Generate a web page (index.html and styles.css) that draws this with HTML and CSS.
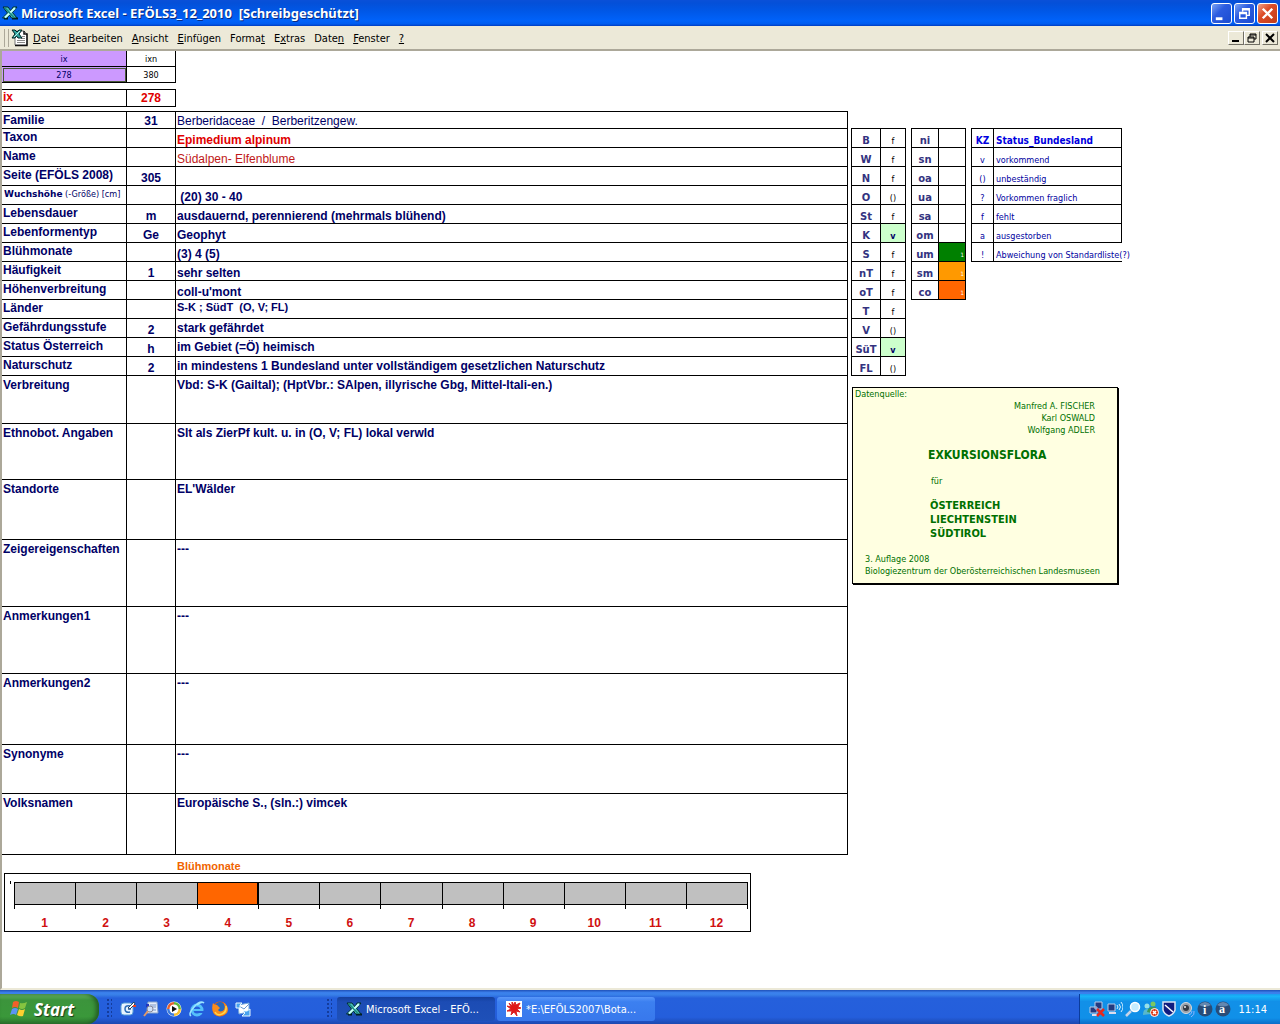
FILE: index.html
```html
<!DOCTYPE html>
<html lang="de">
<head>
<meta charset="UTF-8">
<meta name="viewport" content="width=device-width, initial-scale=1.0">
<title>Microsoft Excel - EFÖLS3_12_2010 [Schreibgeschützt]</title>
<link rel="stylesheet" href="styles.css">
</head>
<body>
  <svg class="defs" width="0" height="0" aria-hidden="true">
    <symbol id="excel" viewBox="0 0 16 16">
      <path d="M2 13.500H6M10 13.500H16" stroke="#001a1a" stroke-width="2"/>
      <path d="M1 2H6L9 6L11 2H15L10.500 7.500L15 13H9.500L7.500 10L5 13H0.500L5.500 8Z" fill="#4cc4bc" stroke="#002c2c"/>
      <path d="M13 3L3 12.500" stroke="#c8fff8" stroke-width="2"/>
      <path d="M3 3L12 12.500" stroke="#1c8880" stroke-width="1.500"/>
    </symbol>
  </svg>

  <header class="titlebar">
    <svg class="icon"><use href="#excel"/></svg>
    <h1>Microsoft Excel - EFÖLS3_12_2010&nbsp; [Schreibgeschützt]</h1>
    <div class="window-buttons">
      <button aria-label="Minimieren"><svg viewBox="0 0 20 20"><path d="M4 14H11V17H4Z" fill="#fff"/></svg></button>
      <button aria-label="Verkleinern"><svg viewBox="0 0 20 20"><path d="M8 8V5H15V12H12M8 6H15M5 9H12V15H5ZM5 10H12" fill="none" stroke="#fff" stroke-width="1.500"/></svg></button>
      <button class="close" aria-label="Schließen"><svg viewBox="0 0 20 20"><path d="M5 5L15 15M15 5L5 15" stroke="#fff" stroke-width="2.500"/></svg></button>
    </div>
  </header>

  <nav class="menubar">
    <span class="grip"></span>
    <svg class="icon doc" viewBox="0 0 18 18">
      <path d="M4 2H13L16 5V16H4Z" fill="#fff" stroke="#777"/>
      <path d="M13 2V5H16V16.500H4" fill="none" stroke="#111" stroke-width="1.500"/>
      <path d="M6 11.500H14M6 13.500H14M11 7.500H14M10 9.500H14" stroke="#888"/>
      <path d="M1 1H4L6 3L8 1H11L8 5L11 9H7L5.500 7L4 9H1L4 5Z" fill="#33a7a0" stroke="#022"/>
      <path d="M9 2L3 8" stroke="#b8f4ee"/>
    </svg>
    <button><u>D</u>atei</button>
    <button><u>B</u>earbeiten</button>
    <button><u>A</u>nsicht</button>
    <button><u>E</u>infügen</button>
    <button>Forma<u>t</u></button>
    <button>E<u>x</u>tras</button>
    <button>Date<u>n</u></button>
    <button><u>F</u>enster</button>
    <button><u>?</u></button>
    <div class="doc-buttons">
      <button aria-label="Mappe minimieren"><svg viewBox="0 0 12 10"><path d="M2 7H9V9H2Z"/></svg></button>
      <button aria-label="Mappe verkleinern"><svg viewBox="0 0 12 10"><path d="M4 4V1H10V6H8M4 2H10M2 4H8V9H2ZM2 5H8" fill="none" stroke="#000"/></svg></button>
      <button class="doc-close" aria-label="Mappe schließen"><svg viewBox="0 0 12 10"><path d="M2 1L10 9M10 1L2 9" stroke="#000" stroke-width="2"/></svg></button>
    </div>
  </nav>

  <main class="sheet">
    <section class="record">
      <table class="grid index">
        <tr><td class="violet">ix</td><td>ixn</td></tr>
        <tr><td class="violet selected">278</td><td>380</td></tr>
      </table>
      <table class="grid current">
        <tr><th>ix</th><td>278</td></tr>
      </table>
      <table class="grid fields">
        <tr class="first"><th>Familie</th><td>31</td><td class="plain">Berberidaceae&nbsp; /&nbsp; Berberitzengew.</td></tr>
        <tr><th>Taxon</th><td></td><td class="red">Epimedium alpinum</td></tr>
        <tr><th>Name</th><td></td><td class="plain darkred">Südalpen- Elfenblume</td></tr>
        <tr><th>Seite (EFÖLS 2008)</th><td>305</td><td></td></tr>
        <tr><th class="small"><b>Wuchshöhe</b> (-Größe) [cm]</th><td></td><td>&nbsp;(20) 30 - 40</td></tr>
        <tr><th>Lebensdauer</th><td>m</td><td>ausdauernd, perennierend (mehrmals blühend)</td></tr>
        <tr><th>Lebenformentyp</th><td>Ge</td><td>Geophyt</td></tr>
        <tr><th>Blühmonate</th><td></td><td>(3) 4 (5)</td></tr>
        <tr><th>Häufigkeit</th><td>1</td><td>sehr selten</td></tr>
        <tr><th>Höhenverbreitung</th><td></td><td>coll-u'mont</td></tr>
        <tr><th>Länder</th><td></td><td class="lands">S-K ; SüdT&nbsp; (O, V; FL)</td></tr>
        <tr><th>Gefährdungsstufe</th><td>2</td><td class="mid">stark gefährdet</td></tr>
        <tr><th>Status Österreich</th><td>h</td><td class="mid">im Gebiet (=Ö) heimisch</td></tr>
        <tr><th>Naturschutz</th><td>2</td><td class="mid">in mindestens 1 Bundesland unter vollständigem gesetzlichen Naturschutz</td></tr>
        <tr class="long h48"><th>Verbreitung</th><td></td><td>Vbd: S-K (Gailtal); (HptVbr.: SAlpen, illyrische Gbg, Mittel-Itali-en.)</td></tr>
        <tr class="long h56"><th>Ethnobot. Angaben</th><td></td><td>Slt als ZierPf kult. u. in (O, V; FL) lokal verwld</td></tr>
        <tr class="long h60"><th>Standorte</th><td></td><td>EL'Wälder</td></tr>
        <tr class="long h67"><th>Zeigereigenschaften</th><td></td><td>---</td></tr>
        <tr class="long h67"><th>Anmerkungen1</th><td></td><td>---</td></tr>
        <tr class="long h71"><th>Anmerkungen2</th><td></td><td>---</td></tr>
        <tr class="long h49"><th>Synonyme</th><td></td><td>---</td></tr>
        <tr class="long h61"><th>Volksnamen</th><td></td><td>Europäische S., (sln.:) vimcek</td></tr>
      </table>

      <h2 class="chart-title">Blühmonate</h2>
      <div class="chart">
        <div class="months">
          <div class="month"><span></span>1</div>
          <div class="month"><span></span>2</div>
          <div class="month"><span></span>3</div>
          <div class="month on"><span></span>4</div>
          <div class="month"><span></span>5</div>
          <div class="month"><span></span>6</div>
          <div class="month"><span></span>7</div>
          <div class="month"><span></span>8</div>
          <div class="month"><span></span>9</div>
          <div class="month"><span></span>10</div>
          <div class="month"><span></span>11</div>
          <div class="month"><span></span>12</div>
        </div>
      </div>
    </section>

    <aside class="side">
      <div class="lists">
        <table class="grid codes lands-table">
          <tr><th>B</th><td>f</td></tr>
          <tr><th>W</th><td>f</td></tr>
          <tr><th>N</th><td>f</td></tr>
          <tr><th>O</th><td>()</td></tr>
          <tr><th>St</th><td>f</td></tr>
          <tr><th>K</th><td class="present">v</td></tr>
          <tr><th>S</th><td>f</td></tr>
          <tr><th>nT</th><td>f</td></tr>
          <tr><th>oT</th><td>f</td></tr>
          <tr><th>T</th><td>f</td></tr>
          <tr><th>V</th><td>()</td></tr>
          <tr><th>SüT</th><td class="present">v</td></tr>
          <tr><th>FL</th><td>()</td></tr>
        </table>
        <table class="grid codes zones-table">
          <tr><th>ni</th><td></td></tr>
          <tr><th>sn</th><td></td></tr>
          <tr><th>oa</th><td></td></tr>
          <tr><th>ua</th><td></td></tr>
          <tr><th>sa</th><td></td></tr>
          <tr><th>om</th><td></td></tr>
          <tr><th>um</th><td class="zone green">1</td></tr>
          <tr><th>sm</th><td class="zone amber">1</td></tr>
          <tr><th>co</th><td class="zone orange">1</td></tr>
        </table>
        <table class="grid codes status-table">
          <tr><th>KZ</th><th>Status_Bundesland</th></tr>
          <tr><td>v</td><td>vorkommend</td></tr>
          <tr><td>()</td><td>unbeständig</td></tr>
          <tr><td>?</td><td>Vorkommen fraglich</td></tr>
          <tr><td>f</td><td>fehlt</td></tr>
          <tr><td>a</td><td>ausgestorben</td></tr>
          <tr class="last"><td>!</td><td>Abweichung von Standardliste(?)</td></tr>
        </table>
      </div>

      <div class="source">
        <p>Datenquelle:</p>
        <p class="authors">Manfred A. FISCHER<br>Karl OSWALD<br>Wolfgang ADLER</p>
        <div class="book">
          <h2>EXKURSIONSFLORA</h2>
          <p>für</p>
          <h3>ÖSTERREICH<br>LIECHTENSTEIN<br>SÜDTIROL</h3>
        </div>
        <p class="edition">3. Auflage 2008<br>Biologiezentrum der Oberösterreichischen Landesmuseen</p>
      </div>
    </aside>
  </main>

  <footer class="taskbar">
    <button class="start">
      <svg viewBox="0 0 20 18">
        <path d="M3 2Q6 0 9 2L8 8Q5 6 2 8Z" fill="#f0602a"/>
        <path d="M10 3Q13 4 17 2L15 8Q12 10 9 8Z" fill="#86c440"/>
        <path d="M2 9Q5 7 8 9L6 15Q4 13 0 15Z" fill="#5b94f4"/>
        <path d="M9 9Q12 11 15 9L13 16Q10 17 7 15Z" fill="#fcd030"/>
      </svg>
      Start
    </button>
    <span class="dots"></span>
    <div class="quick">
      <button aria-label="Desktop anzeigen"><svg viewBox="0 0 16 16"><rect x="1" y="2" width="12" height="12" rx="3" fill="#e8f4ff" stroke="#5aa0d8"/><path d="M10 5Q5 4 5 8T10 11M8 8H11" fill="none" stroke="#2a6cb8" stroke-width="1.500"/><path d="M8 7L14 1L15 3L10 8Z" fill="#fff" stroke="#246"/><path d="M13 5H16" stroke="#e84020" stroke-width="2"/></svg></button>
      <button aria-label="Suche"><svg viewBox="0 0 16 16"><path d="M5 1H14L15 12H4Z" fill="#e6eefa" stroke="#8aa6cc"/><path d="M7 4H13M7 6H13M8 9H13" stroke="#7898c8"/><path d="M3 3H6V6H3Z" fill="#2238c0"/><circle cx="7" cy="8" r="3" fill="#cfe2fa" stroke="#889"/><path d="M5 10L1 15" stroke="#e29a68" stroke-width="2"/></svg></button>
      <button aria-label="Media Player"><svg viewBox="0 0 16 16"><circle cx="8" cy="8" r="7.500" fill="#f6f6f0"/><path d="M8 1A7 7 0 0 0 1 8H4A4 4 0 0 1 8 4Z" fill="#e66030"/><path d="M8 1A7 7 0 0 1 15 8H12A4 4 0 0 0 8 4Z" fill="#62b83c"/><path d="M1 8A7 7 0 0 0 8 15V12A4 4 0 0 1 4 8Z" fill="#3c7ce0"/><path d="M15 8A7 7 0 0 1 8 15V12A4 4 0 0 0 12 8Z" fill="#f8c030"/><circle cx="8" cy="8" r="4.500" fill="#fff"/><path d="M6 5L11 8L6 11Z" fill="#111"/></svg></button>
      <button aria-label="Internet Explorer"><svg viewBox="0 0 16 16"><circle cx="8" cy="9" r="5" fill="none" stroke="#54c0fa" stroke-width="3"/><path d="M4 9H13" stroke="#54c0fa" stroke-width="2"/><path d="M9 11H15" stroke="#245edc" stroke-width="2"/><path d="M2 15Q-1 13 5 6T15 2Q13 0 8 4" fill="none" stroke="#9be4ff" stroke-width="1.500"/></svg></button>
      <button aria-label="Firefox"><svg viewBox="0 0 16 16"><circle cx="8" cy="8" r="7.500" fill="#e85c10"/><circle cx="8" cy="6" r="5" fill="#2468c0"/><path d="M1 2Q2 4 5 4L8 7L6 9Q8 12 12 9Q14 5 11 1Q18 6 15 12Q8 18 2 13Q-1 8 1 2Z" fill="#fa8c1c"/><path d="M14 5Q15 11 10 13T3 11" fill="none" stroke="#ffd54a" stroke-width="1.500"/></svg></button>
      <button aria-label="Outlook Express"><svg viewBox="0 0 16 16"><path d="M3 4L14 2V11L4 13Z" fill="#fff" stroke="#75a9dc"/><path d="M4 5L9 8L14 3" fill="none" stroke="#6a9ad0"/><path d="M1 2H7L5 4V7H1ZM15 8V15H7L10 12L8 10H12Z" fill="#49a2ee" stroke="#e8f8ff"/></svg></button>
    </div>
    <span class="dots second"></span>
    <button class="task active"><svg class="icon"><use href="#excel"/></svg>Microsoft Excel - EFÖ...</button>
    <button class="task"><svg class="icon" viewBox="0 0 16 16"><path d="M0 0H16V16H0Z" fill="#fff"/><path d="M6 1L8 4L9 1L10 4L14 2L12 6L15 7L11 8L14 11L10 10L11 15L8 11L5 14L6 10L1 10L5 8L1 5L5 6L3 2L6 5Z" fill="#e01818" stroke="#d22"/></svg>*E:\EFÖLS2007\Bota...</button>
    <div class="tray">
      <svg viewBox="0 0 16 16"><path d="M6 1H13V8H6ZM1 6H8V12H1Z" fill="#223a80" stroke="#b8cce8"/><path d="M3 14H10" stroke="#dde" stroke-width="2"/><path d="M8 8L15 15M15 8L8 15" stroke="#e8281c" stroke-width="2.500"/></svg>
      <svg viewBox="0 0 16 16"><path d="M1 3H8V10H1Z" fill="#223a80" stroke="#b8cce8"/><path d="M2 12H9" stroke="#dde" stroke-width="2"/><path d="M10 4Q12 6 10 8M12 3Q15 6 12 9M14 1Q18 6 14 11" fill="none" stroke="#d8f0ff"/></svg>
      <svg viewBox="0 0 16 16"><path d="M6 10L1 15" stroke="#c8d4e8" stroke-width="2.500"/><circle cx="10" cy="6" r="4.500" fill="#c4ecff" stroke="#fff" stroke-width="1.500"/></svg>
      <svg viewBox="0 0 16 16"><circle cx="4" cy="5" r="2.500" fill="#98e0e8"/><path d="M0 14Q0 7 5 8L8 13Z" fill="#58b8cc"/><circle cx="10" cy="3" r="2.500" fill="#7cc860"/><path d="M4 11Q5 5 13 6V13Z" fill="#3c9858"/><circle cx="11.500" cy="11.500" r="4" fill="#dd3a18" stroke="#fff"/><path d="M10 10L13 13M13 10L10 13" stroke="#fff" stroke-width="1.500"/></svg>
      <svg viewBox="0 0 16 16"><path d="M2 1H14V9Q13 13 8 15Q3 13 2 9Z" fill="#101c80" stroke="#d8e4f4" stroke-width="1.500"/><path d="M4 4L12 11" stroke="#fff" stroke-width="1.500"/></svg>
      <svg viewBox="0 0 16 16"><circle cx="7" cy="7" r="5.500" fill="#9aa0a8" stroke="#d8dce0"/><circle cx="7" cy="7" r="3" fill="#343a44"/><circle cx="6" cy="6" r="1" fill="#eee"/><path d="M10 14Q13 13 13 10M12 16Q16 14 15 10" fill="none" stroke="#8ab4ff"/></svg>
      <svg viewBox="0 0 16 16"><circle cx="8" cy="8" r="7.500" fill="#284c78"/><path d="M2 4Q8-2 14 4Q8 7 2 4Z" fill="#6488b0"/><text x="6" y="13" class="badge">i</text></svg>
      <svg viewBox="0 0 16 16"><circle cx="8" cy="8" r="7.500" fill="#284c78"/><path d="M2 4Q8-2 14 4Q8 7 2 4Z" fill="#6488b0"/><text x="4" y="12" class="badge">a</text></svg>
      <time>11:14</time>
    </div>
  </footer>
</body>
</html>
```

FILE: styles.css
```css
* {
  box-sizing: border-box;
}

body {
  margin: 0;
  min-height: 100vh;
  display: flex;
  flex-direction: column;
  background-color: #fff;
  font-family: "DejaVu Sans Condensed", "DejaVu Sans", Tahoma, sans-serif;
  font-size: 11px;
}

h1, h2, h3, p {
  margin: 0;
}

button {
  font: inherit;
  color: inherit;
  background: none;
  border: none;
  padding: 0;
}

.defs {
  position: absolute;
}

.icon {
  width: 16px;
  height: 16px;
  flex: none;
}

/* title bar */
.titlebar {
  height: 26px;
  display: flex;
  align-items: center;
  gap: 3px;
  padding: 0 2px;
  background: linear-gradient(#0a50d8, #0450d8 12%, #0058e8 45%, #0062fa 80%, #005cf0 92%, #003cc0);
  color: #fff;
}

.titlebar h1 {
  flex: 1;
  font: bold 13px "Noto Sans", sans-serif;
  text-shadow: 1px 1px #0a2a80;
  white-space: nowrap;
}

.window-buttons {
  display: flex;
  gap: 2px;
}

.window-buttons button {
  width: 21px;
  height: 21px;
  border: 1px solid #fff;
  border-radius: 3px;
  background: linear-gradient(135deg, #7ca4f4, #2c5ce0 40%, #1c4cd0);
}

.window-buttons .close {
  background: linear-gradient(135deg, #f0a088, #dc4c28 40%, #c03c18);
}

.window-buttons svg {
  display: block;
  width: 19px;
  height: 19px;
}

/* menu bar */
.menubar {
  height: 25px;
  display: flex;
  align-items: center;
  gap: 9px;
  padding: 1px 2px 0 4px;
  background-color: #ece9d8;
  border-bottom: 2px solid #aca899;
}

.grip {
  width: 5px;
  height: 18px;
  border-left: 1px solid #aca899;
  border-right: 1px solid #aca899;
}

.menubar .doc {
  width: 18px;
  height: 18px;
  margin: 0 -5px 0 -7px;
}

.menubar button {
  white-space: nowrap;
}

.doc-buttons {
  display: flex;
  margin-left: auto;
}

.doc-buttons button {
  width: 16px;
  height: 14px;
  border: 1px solid;
  border-color: #fff #716f64 #716f64 #fff;
}

.doc-buttons .doc-close {
  margin-left: 2px;
}

.doc-buttons svg {
  display: block;
  width: 12px;
  height: 10px;
  margin: 1px;
}

/* sheet */
.sheet {
  flex: 1;
  display: flex;
  gap: 3px;
  border-left: 2px solid #aca899;
  border-bottom: 2px solid #ece9d8;
}

.record {
  flex: 0 1 846px;
}

.grid {
  table-layout: fixed;
  border-spacing: 0;
  color: #000066;
}

.grid th,
.grid td {
  height: 19px;
  padding: 0 1px;
  border-right: 1px solid #000;
  border-bottom: 1px solid #000;
  white-space: nowrap;
  overflow: hidden;
}

.index,
.current {
  width: 174px;
}

.index td {
  height: 16px;
  font-size: 9px;
  line-height: 12px;
  text-align: center;
  color: #000;
}

.index td:first-child,
.current th,
.fields th {
  width: 125px;
}

.index .violet {
  background-color: #cc99ff;
  color: #000066;
}

.index .selected {
  outline: 1px solid #4a5a3a;
  outline-offset: -2px;
}

.current {
  margin: 6px 0 4px;
  border-top: 1px solid #000;
}

.current th,
.current td {
  height: 17px;
  font-family: "Liberation Sans", Arial, sans-serif;
  font-size: 12px;
  line-height: 14px;
  font-weight: bold;
  text-align: center;
  color: #e00000;
}

.current th {
  text-align: left;
  vertical-align: top;
}

.fields {
  width: 100%;
  border-top: 1px solid #000;
  font-family: "Liberation Sans", Arial, sans-serif;
  font-size: 12px;
  line-height: 14px;
}

.fields th {
  padding-top: 1px;
  text-align: left;
  vertical-align: top;
}

.fields td {
  font-weight: bold;
  vertical-align: bottom;
}

.fields td:nth-child(2) {
  width: 49px;
  text-align: center;
}

.fields .first th,
.fields .first td {
  height: 17px;
}

.fields .plain {
  font-weight: normal;
}

.fields .red {
  color: #e00000;
}

.fields .darkred {
  color: #c01818;
}

.fields .small {
  padding-left: 2px;
  font-family: "DejaVu Sans Condensed", "DejaVu Sans", sans-serif;
  font-size: 9px;
  font-weight: normal;
}

.fields .small b {
  font-family: "DejaVu Sans", sans-serif;
}

.fields .lands {
  font-size: 11px;
  vertical-align: top;
}

.fields .mid {
  vertical-align: middle;
}

.fields .long th,
.fields .long td {
  padding-top: 2px;
  vertical-align: top;
}

.fields .h48 td { height: 48px; }
.fields .h49 td { height: 49px; }
.fields .h56 td { height: 56px; }
.fields .h60 td { height: 60px; }
.fields .h61 td { height: 61px; }
.fields .h67 td { height: 67px; }
.fields .h71 td { height: 71px; }

/* flowering months */
.chart-title {
  margin: 4px 0 0 175px;
  font: bold 11px/14px "Liberation Sans", Arial, sans-serif;
  color: #f06400;
}

.chart {
  width: 747px;
  max-width: 100%;
  margin-left: 2px;
  padding: 8px 2px 2px 9px;
  border: 1px solid #000;
  background: linear-gradient(#000, #000) 5px 7px / 1px 3px no-repeat;
}

/* the axis ticks run 4px below the bar */
.months {
  display: grid;
  grid-template-columns: repeat(12, 1fr);
  padding-right: 1px;
  background: linear-gradient(#000, #000) right top / 1px 27px no-repeat;
}

.month {
  height: 47px;
  background: linear-gradient(#000, #000) left top / 1px 27px no-repeat;
  font: bold 12px/14px "Liberation Sans", Arial, sans-serif;
  text-align: center;
  color: #d01010;
}

.month span {
  display: block;
  height: 23px;
  margin-bottom: 11px;
  border: 1px solid #000;
  border-right: none;
  background-color: #c0c0c0;
}

.month.on span {
  border-right: 1px solid #000;
  background-color: #ff6600;
}

/* side lists */
.side {
  padding-top: 77px;
}

.lists {
  display: flex;
  align-items: flex-start;
  gap: 5px;
}

.codes {
  border-top: 1px solid #000;
  border-left: 1px solid #000;
  font-size: 9px;
  line-height: 12px;
}

.codes th,
.codes td {
  text-align: center;
  vertical-align: bottom;
}

.codes th {
  font-family: "DejaVu Sans", Verdana, sans-serif;
  font-size: 10px;
  color: #333380;
}

.lands-table {
  width: 55px;
}

.lands-table th {
  width: 29px;
}

.lands-table td {
  color: #000;
}

.lands-table .present {
  background-color: #ccffcc;
  color: #000066;
  font-weight: bold;
}

.zones-table {
  width: 55px;
}

.zones-table th {
  width: 27px;
}

.codes .zone {
  color: #fff;
  font-size: 6px;
  text-align: right;
}

.green { background-color: #008000; }
.amber { background-color: #ff9900; }
.orange { background-color: #ff6600; }

.status-table {
  width: 151px;
  border-right: none;
}

.status-table th,
.status-table td {
  color: #0000a0;
}

.status-table th {
  font-size: 10px;
  font-family: inherit;
  color: #0000e0;
}

.status-table tr > :first-child {
  width: 22px;
}

.status-table tr > :last-child {
  padding-left: 2px;
  text-align: left;
}

.status-table .last td:last-child {
  border-right: none;
  overflow: visible;
}

/* source note */
.source {
  width: 266px;
  margin: 11px 0 0 1px;
  padding: 0 2px 6px;
  border: 1px solid #000;
  box-shadow: 1px 1px #000;
  background-color: #ffffe1;
  color: #007000;
  font-size: 9px;
  line-height: 12px;
}

.authors {
  padding-right: 20px;
  text-align: right;
}

.book {
  padding: 12px 0 12px 73px;
}

.book h2 {
  font-size: 12px;
  line-height: 14px;
}

.book p {
  padding: 13px 3px 12px;
}

.book h3 {
  padding-left: 2px;
  font-size: 11px;
  line-height: 14px;
}

.edition {
  padding-left: 10px;
  white-space: nowrap;
}

/* taskbar */
.taskbar {
  height: 34px;
  display: flex;
  align-items: stretch;
  padding-top: 4px;
  background: linear-gradient(#1f50b8, #3c82ee 8%, #3880e8 14%, #2560dc 24%, #245edc 80%, #1c48b0);
  color: #fff;
}

.start {
  width: 99px;
  display: flex;
  align-items: center;
  gap: 4px;
  padding-left: 10px;
  border-radius: 0 12px 12px 0;
  background: linear-gradient(#6cb868, #3c943c 20%, #3a983a 75%, #2c7830);
  box-shadow: inset -3px 0 4px #245c24;
  font: italic bold 17px "Open Sans", sans-serif;
  text-shadow: 1px 1px 1px #183c18;
}

.start svg {
  width: 20px;
  height: 18px;
}

.dots {
  width: 5px;
  margin: 5px 8px;
  background: radial-gradient(circle at 1px 1px, #143c9c 1px, transparent 1px) 0 0 / 4px 4px;
}

.quick {
  display: flex;
  align-items: center;
  gap: 7px;
}

.quick svg {
  display: block;
  width: 16px;
  height: 16px;
}

.dots.second {
  margin-left: 76px;
  margin-right: 5px;
}

.task {
  width: 158px;
  display: flex;
  align-items: center;
  gap: 4px;
  margin: 3px 2px 3px 0;
  padding-left: 9px;
  border-radius: 3px;
  background: linear-gradient(#5a98fa, #3c80f0 20%, #3878ec);
  white-space: nowrap;
}

.task.active {
  background: linear-gradient(#14409c, #1c4cb4 20%, #1e50b8);
}

.tray {
  display: flex;
  align-items: center;
  gap: 2px;
  margin-left: auto;
  padding: 0 13px 0 9px;
  border-left: 1px solid #0a3c9c;
  background: linear-gradient(#1c9cf0, #18b4f8 8%, #1290e8 25%, #1090e8 80%, #0c6cc8);
}

.tray svg {
  width: 16px;
  height: 16px;
}

.tray time {
  margin-left: 5px;
}

.badge {
  font: bold 12px "Liberation Serif", serif;
  fill: #fff;
}
```
